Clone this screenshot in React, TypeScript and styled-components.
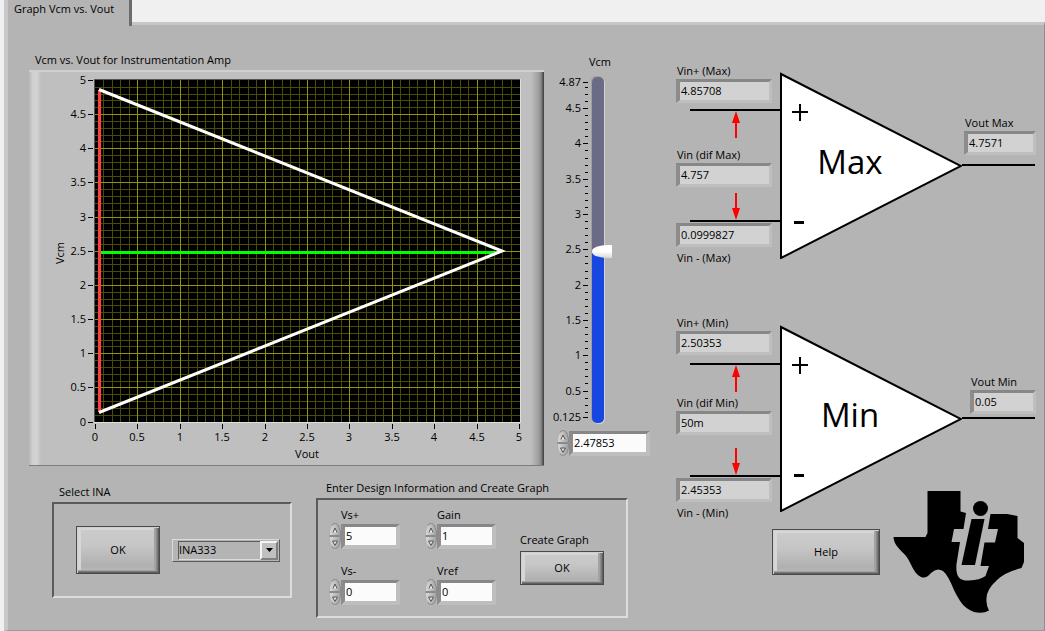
import React, { useState } from "react";
import styled, { createGlobalStyle } from "styled-components";

const GlobalStyle = createGlobalStyle`
  *, *::before, *::after { box-sizing: border-box; }
  body {
    margin: 0;
    background: #f0f0f0;
    color: #000;
    font-family: "Open Sans", "Noto Sans", sans-serif;
    font-size: 11px;
    line-height: 16px;
  }
  button, input, select, output { font: inherit; color: inherit; }
`;

const face = "#b4b4b4";

const Window = styled.div`
  display: flex;
  flex-direction: column;
  min-height: 100vh;
  padding-left: 4px;
`;

const TabStrip = styled.div`
  display: flex;
  height: 22px;
`;

const Tab = styled.button`
  position: relative;
  height: 26px;
  width: 128px;
  padding: 0 0 8px 6px;
  border: 0;
  border-left: 4px solid #c8c8c8;
  border-right: 3px solid #6c6c6c;
  background: ${face};
  text-align: left;
  white-space: nowrap;
`;

const Panel = styled.main`
  flex: 1;
  display: flex;
  align-items: flex-start;
  padding: 27px 8px 12px 21px;
  background: ${face};
  border-top: 3px solid #c6c6c6;
  border-left: 4px solid #c8c8c8;
  border-right: 1px solid #8e8e8e;
  border-bottom: 1px solid #9a9a9a;
`;

const LeftColumn = styled.div`
  flex: 1;
  min-width: 0;
`;

const PlotRow = styled.div`
  display: flex;
  gap: 8px;
  padding-right: 26px;
`;

const ChartFigure = styled.figure`
  flex: 1;
  min-width: 0;
  margin: 0;
`;

const ChartTitle = styled.figcaption`
  padding: 0 0 2px 6px;
`;

const ChartFrame = styled.div`
  border-top: 2px solid #d0d0d0;
  border-bottom: 1px solid #7c7c7c;
  background: linear-gradient(
      to right,
      #b8b8b8 0,
      #d2d2d2 4px,
      #d2d2d2 8px,
      #bfbfbf 12px,
      #bfbfbf calc(100% - 13px),
      #9c9c9c calc(100% - 5px),
      #787878 calc(100% - 2px),
      #484848 calc(100% - 1px)
    );

  svg {
    display: block;
    width: 100%;
    height: auto;
  }
`;

const SliderColumn = styled.div`
  display: flex;
  flex-direction: column;
  width: 98px;
  padding-top: 2px;
`;

const SliderLabel = styled.label`
  padding-left: 37px;
`;

const SliderBody = styled.div`
  display: flex;
  align-items: flex-start;
  gap: 4px;
  padding: 7px 0;

  svg {
    display: block;
    flex: none;
  }
`;

const SliderEntry = styled.div`
  padding-left: 5px;
`;

const VerticalRange = styled.input`
  appearance: none;
  writing-mode: vertical-lr;
  direction: rtl;
  width: 20px;
  height: 346px;
  margin: 0;
  background: transparent;

  &::-webkit-slider-runnable-track {
    width: 12px;
    height: 346px;
    margin-right: 8px;
    border-radius: 5px;
    background: linear-gradient(#6b6b85 50%, #1846e0 50%);
    box-shadow: 1px 1px 0 #d2d2d2, -1px -1px 0 #a2a2a2;
  }

  &::-webkit-slider-thumb {
    appearance: none;
    width: 20px;
    height: 13px;
    border-radius: 16px 1px 1px 16px / 6px 1px 1px 6px;
    background: linear-gradient(#fff 50%, #d8d8d8);
  }
`;

const NumericRow = styled.div`
  display: flex;
  align-items: center;
`;

const Spinner = styled.div`
  display: flex;
  flex-direction: column;
  width: 12px;
  height: 26px;
`;

const SpinButton = styled.button<{ $down?: boolean }>`
  width: 12px;
  height: 13px;
  padding: 0;
  border: 1px solid #8a8a8a;
  border-left-color: #b0b0b0;
  border-radius: ${(p) => (p.$down ? "1px 1px 6px 6px / 1px 1px 11px 11px" : "6px 6px 1px 1px / 11px 11px 1px 1px")};
  background: linear-gradient(to right, #dadada, #a4a4a4);

  svg {
    display: block;
    width: 6px;
    height: 6px;
    margin: auto;
  }
`;

const sunken = `
  border-style: solid;
  border-color: #878787 #bebebe #bebebe #8c8c8c;
`;

const NumberField = styled.input<{ $width: number }>`
  width: ${(p) => p.$width}px;
  height: 25px;
  padding: 0 2px 0 1px;
  ${sunken}
  border-width: 3px 4px 4px 4px;
  border-radius: 0;
  background: #fbfbfb;
`;

const Readout = styled.output<{ $width: number }>`
  display: block;
  width: ${(p) => p.$width}px;
  height: 24px;
  padding-left: 1px;
  line-height: 18px;
  ${sunken}
  border-width: 3px 3px 3px 4px;
  background: #d2d2d2;
`;

const GroupRow = styled.div`
  display: flex;
  gap: 24px;
  padding: 14px 27px 0 23px;
`;

const Group = styled.section<{ $width: number; $drop?: boolean }>`
  width: ${(p) => p.$width}px;
  padding-top: ${(p) => (p.$drop ? 4 : 0)}px;
`;

const GroupTitle = styled.h2<{ $indent: number }>`
  margin: 0;
  padding: 0 0 2px ${(p) => p.$indent}px;
  font-size: 11px;
  font-weight: 400;
`;

const SunkenBox = styled.div`
  display: flex;
  align-items: center;
  border: 2px solid;
  border-color: #5a5a5a #dcdcdc #dcdcdc #5a5a5a;
`;

const SelectBox = styled(SunkenBox)`
  height: 96px;
  gap: 12px;
  padding: 0 10px 0 22px;
`;

const DesignBox = styled(SunkenBox)`
  height: 120px;
  padding: 0 22px 4px 11px;
  justify-content: space-between;
`;

const BevelButton = styled.button<{ $width: number; $height: number }>`
  display: block;
  flex: none;
  width: ${(p) => p.$width}px;
  height: ${(p) => p.$height}px;
  padding: 0;
  border: 1px solid #4a4a4a;
  background: linear-gradient(#cccccc, #c6c6c6 40%, #b0b0b0 85%, #bcbcbc);
  box-shadow:
    inset 1px 1px 0 #cfcfcf,
    inset -1px -1px 0 #5e5e5e,
    inset -2px -2px 0 #7a7a7a,
    inset -3px -2px 0 #8a8a8a,
    inset -5px -3px 0 #a2a2a2,
    inset 4px 3px 0 #d6d6d6;
`;

const ComboFrame = styled.div`
  width: 108px;
  height: 23px;
  padding: 1px 1px 1px 5px;
  border: 1px solid;
  border-color: #dcdcdc #5a5a5a #5a5a5a #dcdcdc;
  display: grid;
  grid-template-columns: 1fr 18px;
`;

const Combo = styled.select`
  appearance: none;
  grid-area: 1 / 1 / 2 / 3;
  width: 83px;
  height: 19px;
  padding: 0;
  border: 1px solid;
  border-color: #5a5a5a #dcdcdc #dcdcdc #5a5a5a;
  border-radius: 0;
  background: ${face};
`;

const ComboArrow = styled.span`
  grid-area: 1 / 2 / 2 / 3;
  display: flex;
  align-items: center;
  justify-content: center;
  height: 19px;
  border: 2px solid;
  border-color: #f4f4f4 #808080 #808080 #f4f4f4;
  background: #c0c0c0;
  pointer-events: none;
`;

const FieldGrid = styled.div`
  display: grid;
  grid-template-columns: 71px 71px;
  gap: 14px 25px;
`;

const FieldLabel = styled.label`
  display: block;
  padding-left: 12px;
`;

const CreateBlock = styled.div`
  padding-top: 5px;
`;

const CreateLabel = styled.div`
  padding-bottom: 3px;
`;

const RightColumn = styled.div`
  flex: none;
  width: 360px;
  padding-top: 11px;
`;

const Amp = styled.section`
  display: grid;
  grid-template-columns: 104px 182px 1fr;
  align-items: center;
  margin-bottom: 49px;

  svg {
    display: block;
  }
`;

const InputStack = styled.div`
  display: flex;
  flex-direction: column;
`;

const TerminalLabel = styled.label<{ $below?: boolean }>`
  padding-left: 1px;
  padding-top: ${(p) => (p.$below ? 3 : 0)}px;
`;

const Lead = styled.svg`
  width: 90px;
  margin-left: 14px;
`;

const OutputStack = styled.div`
  display: grid;
  grid-template-rows: 1fr 2px 1fr;
  height: 188px;
`;

const OutputValue = styled.div<{ $gap: number }>`
  display: flex;
  flex-direction: column;
  align-self: end;
  margin-left: auto;
  padding-bottom: ${(p) => p.$gap}px;
`;

const OutputLead = styled.div`
  margin-right: 1px;
  background: #000;
`;

const Footer = styled.footer`
  display: flex;
  align-items: center;
  gap: 13px;
  margin-top: -80px;
  padding-left: 96px;
`;

/* ---------- chart ---------- */

const px = (v: number) => Math.round(66 + v * 84.8);
const py = (v: number) => Math.round(349.5 - v * 68.3);
const halves = Array.from({ length: 11 }, (_, i) => i / 2);
const tenths = Array.from({ length: 51 }, (_, i) => i / 10);

function Chart() {
  return (
    <svg viewBox="0 0 515 393" role="img" aria-label="Vcm vs. Vout" fontSize="11">
      <rect x="65" y="7" width="427" height="344" fill="#dedede" />
      <rect x="65" y="7" width="426" height="343" fill="#555" />
      <rect x="66" y="8" width="425" height="342" fill="#000" />
      <g shapeRendering="crispEdges">
        {tenths.slice(1, 50).map((v) => (
          <g key={v} fill="#4b4b08">
            <rect x={px(v)} y="8" width="1" height="342" />
            <rect x="66" y={py(v)} width="425" height="1" />
          </g>
        ))}
        {halves.slice(1, 10).map((v) => (
          <g key={v} fill="#949408">
            <rect x={px(v)} y="8" width="1" height="342" />
            <rect x="66" y={py(v)} width="425" height="1" />
          </g>
        ))}
        {halves.map((v) => (
          <g key={v}>
            <rect x="59" y={py(v)} width="5" height="1" />
            <rect x={px(v)} y="352" width="1" height="5" />
          </g>
        ))}
        <rect x="69" y="18" width="3" height="322" fill="#ff4040" />
        <rect x="72" y="179" width="398" height="3" fill="#00ff00" />
      </g>
      <path d="M70 17.5 L473 179 L70 340.5" fill="none" stroke="#fff" strokeWidth="3" />
      {halves.map((v) => (
        <g key={v}>
          <text x="57" y={py(v) + 4} textAnchor="end">{v}</text>
          <text x={px(v)} y="369" textAnchor="middle">{v}</text>
        </g>
      ))}
      <text x="278" y="386" textAnchor="middle">Vout</text>
      <text transform="translate(35 181) rotate(-90)" textAnchor="middle">Vcm</text>
    </svg>
  );
}

/* ---------- slider scale ---------- */

const sliderMin = 0.125;
const sliderMax = 4.87;
const sy = (v: number) => Math.round(340 - ((v - sliderMin) * 335) / (sliderMax - sliderMin));

function Scale() {
  const labels = [4.87, 4.5, 4, 3.5, 3, 2.5, 2, 1.5, 1, 0.5, 0.125];
  return (
    <svg width="36" height="346" fontSize="11" overflow="visible" aria-hidden="true">
      {tenths.slice(2, 49).map((v) => (
        <rect key={v} x="33" y={sy(v)} width="3" height="1" />
      ))}
      {labels.map((v) => (
        <g key={v}>
          <rect x="31" y={sy(v)} width="5" height="1" />
          <text x="29" y={sy(v) + 4} textAnchor="end">{v}</text>
        </g>
      ))}
    </svg>
  );
}

/* ---------- controls ---------- */

function Numeric(props: { id: string; value: string; width: number; onChange: (v: string) => void; step?: number; name?: string }) {
  const { id, value, width, onChange, step = 1, name } = props;
  const bump = (d: number) => onChange(String(+(Number(value) + d).toFixed(5)));
  return (
    <NumericRow>
      <Spinner>
        <SpinButton aria-label="Increase" onClick={() => bump(step)}>
          <svg viewBox="0 0 6 6"><path d="M1 5.5 L3 1 L5 5.5" fill="#eee" stroke="#555" /></svg>
        </SpinButton>
        <SpinButton $down aria-label="Decrease" onClick={() => bump(-step)}>
          <svg viewBox="0 0 6 6"><path d="M0.5 1 H5.5 L3 5.5 Z" fill="#ddd" stroke="#555" /></svg>
        </SpinButton>
      </Spinner>
      <NumberField id={id} aria-label={name} $width={width} value={value} onChange={(e) => onChange(e.target.value)} />
    </NumericRow>
  );
}

function DesignField({ id, label, initial }: { id: string; label: string; initial: string }) {
  const [value, setValue] = useState(initial);
  return (
    <div>
      <FieldLabel htmlFor={id}>{label}</FieldLabel>
      <Numeric id={id} value={value} width={59} onChange={setValue} />
    </div>
  );
}

/* ---------- amplifier diagrams ---------- */

interface AmpProps {
  name: string;
  plus: string;
  diff: string;
  minus: string;
  out: string;
  upper: number;
  upperWire: number;
  lower: number;
  outWidth: number;
  outGap: number;
}

function AmpDiagram(p: AmpProps) {
  const n = p.name;
  const w = p.upperWire;
  const l = p.lower;
  return (
    <Amp>
      <InputStack>
        <TerminalLabel htmlFor={`plus${n}`}>{`Vin+ (${n})`}</TerminalLabel>
        <Readout id={`plus${n}`} $width={96}>{p.plus}</Readout>
        <Lead height={p.upper}>
          <rect x="0" y={w - 1} width="90" height="2" />
          <path d={`M46 ${w + 1} l4 12 h-3 v15 h-2 v-15 h-3 z`} fill="#f00" />
        </Lead>
        <TerminalLabel htmlFor={`diff${n}`}>{`Vin (dif ${n})`}</TerminalLabel>
        <Readout id={`diff${n}`} $width={96}>{p.diff}</Readout>
        <Lead height={l}>
          <rect x="0" y={l - 3} width="90" height="2" />
          <path d={`M46 ${l - 3} l4 -12 h-3 v-15 h-2 v15 h-3 z`} fill="#f00" />
        </Lead>
        <Readout id={`minus${n}`} $width={96}>{p.minus}</Readout>
        <TerminalLabel $below htmlFor={`minus${n}`}>{`Vin - (${n})`}</TerminalLabel>
      </InputStack>
      <svg width="182" height="188" role="img" aria-label={`${n} amplifier`}>
        <path d="M1 3 V187 L181 95 Z" fill="#fff" stroke="#000" strokeWidth="2" />
        <path d="M12 41 H28 M20 33 V50" stroke="#000" strokeWidth="2" />
        <path d="M14 151.5 H24" stroke="#000" strokeWidth="3" />
        <text x="70" y="103" textAnchor="middle" fontSize="33">{n}</text>
      </svg>
      <OutputStack>
        <OutputValue $gap={p.outGap}>
          <TerminalLabel htmlFor={`out${n}`}>{`Vout ${n}`}</TerminalLabel>
          <Readout id={`out${n}`} $width={p.outWidth}>{p.out}</Readout>
        </OutputValue>
        <OutputLead />
      </OutputStack>
    </Amp>
  );
}

function TexasLogo() {
  return (
    <svg width="133" height="124" viewBox="0 0 133 124" role="img" aria-label="Texas Instruments">
      <path d="M34.5 1 H67.500 V21.500 L73 23 L70.500 39 H61 L58.500 52 H67 L63.500 74 C62.500 86 66 91 76 90.500 Q87 90 92.500 86 L96 76 H87.500 L91.500 52.500 H102 L105 39 H95 L97.500 24 H114 L124.500 26 V48 L131 53 V72 L128.500 78 Q112 82 104 90 Q93 100 93.500 109 Q93 115 96 120.500 Q90 124 81 122 C70 118 66 110 61 100 Q55 85 50 81 Q44 77 38 83 Q33 89 28 87 C20 83 18 72 13 66 C8 60 0.500 55 0.500 47 H32.500 L34.500 43 Z" />
      <path d="M78.500 29 H91.500 L82 75 H68.500 Z" />
      <circle cx="87.500" cy="18.500" r="7.500" />
    </svg>
  );
}

export default function App() {
  const [vcm, setVcm] = useState("2.47853");
  return (
    <>
      <GlobalStyle />
      <Window>
        <TabStrip role="tablist">
          <Tab role="tab" aria-selected="true">Graph Vcm vs. Vout</Tab>
        </TabStrip>
        <Panel>
          <LeftColumn>
            <PlotRow>
              <ChartFigure>
                <ChartTitle>Vcm vs. Vout for Instrumentation Amp</ChartTitle>
                <ChartFrame>
                  <Chart />
                </ChartFrame>
              </ChartFigure>
              <SliderColumn>
                <SliderLabel htmlFor="vcm">Vcm</SliderLabel>
                <SliderBody>
                  <Scale />
                  <VerticalRange
                    id="vcm"
                    type="range"
                    min={sliderMin}
                    max={sliderMax}
                    step="any"
                    value={vcm}
                    onChange={(e) => setVcm(String(+Number(e.target.value).toFixed(5)))}
                  />
                </SliderBody>
                <SliderEntry>
                  <Numeric id="vcmValue" name="Vcm value" value={vcm} width={81} step={0.1} onChange={setVcm} />
                </SliderEntry>
              </SliderColumn>
            </PlotRow>
            <GroupRow>
              <Group $width={240} $drop>
                <GroupTitle $indent={7}>Select INA</GroupTitle>
                <SelectBox>
                  <BevelButton $width={84} $height={48}>OK</BevelButton>
                  <ComboFrame>
                    <Combo aria-label="Select INA" defaultValue="INA333">
                      <option>INA333</option>
                    </Combo>
                    <ComboArrow>
                      <svg width="7" height="4"><path d="M0 0 H7 L3.500 4 Z" /></svg>
                    </ComboArrow>
                  </ComboFrame>
                </SelectBox>
              </Group>
              <Group $width={312}>
                <GroupTitle $indent={10}>Enter Design Information and Create Graph</GroupTitle>
                <DesignBox>
                  <FieldGrid>
                    <DesignField id="vsPlus" label="Vs+" initial="5" />
                    <DesignField id="gain" label="Gain" initial="1" />
                    <DesignField id="vsMinus" label="Vs-" initial="0" />
                    <DesignField id="vref" label="Vref" initial="0" />
                  </FieldGrid>
                  <CreateBlock>
                    <CreateLabel id="createLabel">Create Graph</CreateLabel>
                    <BevelButton aria-describedby="createLabel" $width={84} $height={34}>OK</BevelButton>
                  </CreateBlock>
                </DesignBox>
              </Group>
            </GroupRow>
          </LeftColumn>
          <RightColumn>
            <AmpDiagram name="Max" plus="4.85708" diff="4.757" minus="0.0999827" out="4.7571"
              upper={44} upperWire={7} lower={36} outWidth={72} outGap={9} />
            <AmpDiagram name="Min" plus="2.50353" diff="50m" minus="2.45353" out="0.05"
              upper={40} upperWire={9} lower={43} outWidth={66} outGap={3} />
            <Footer>
              <BevelButton $width={108} $height={46}>Help</BevelButton>
              <TexasLogo />
            </Footer>
          </RightColumn>
        </Panel>
      </Window>
    </>
  );
}
